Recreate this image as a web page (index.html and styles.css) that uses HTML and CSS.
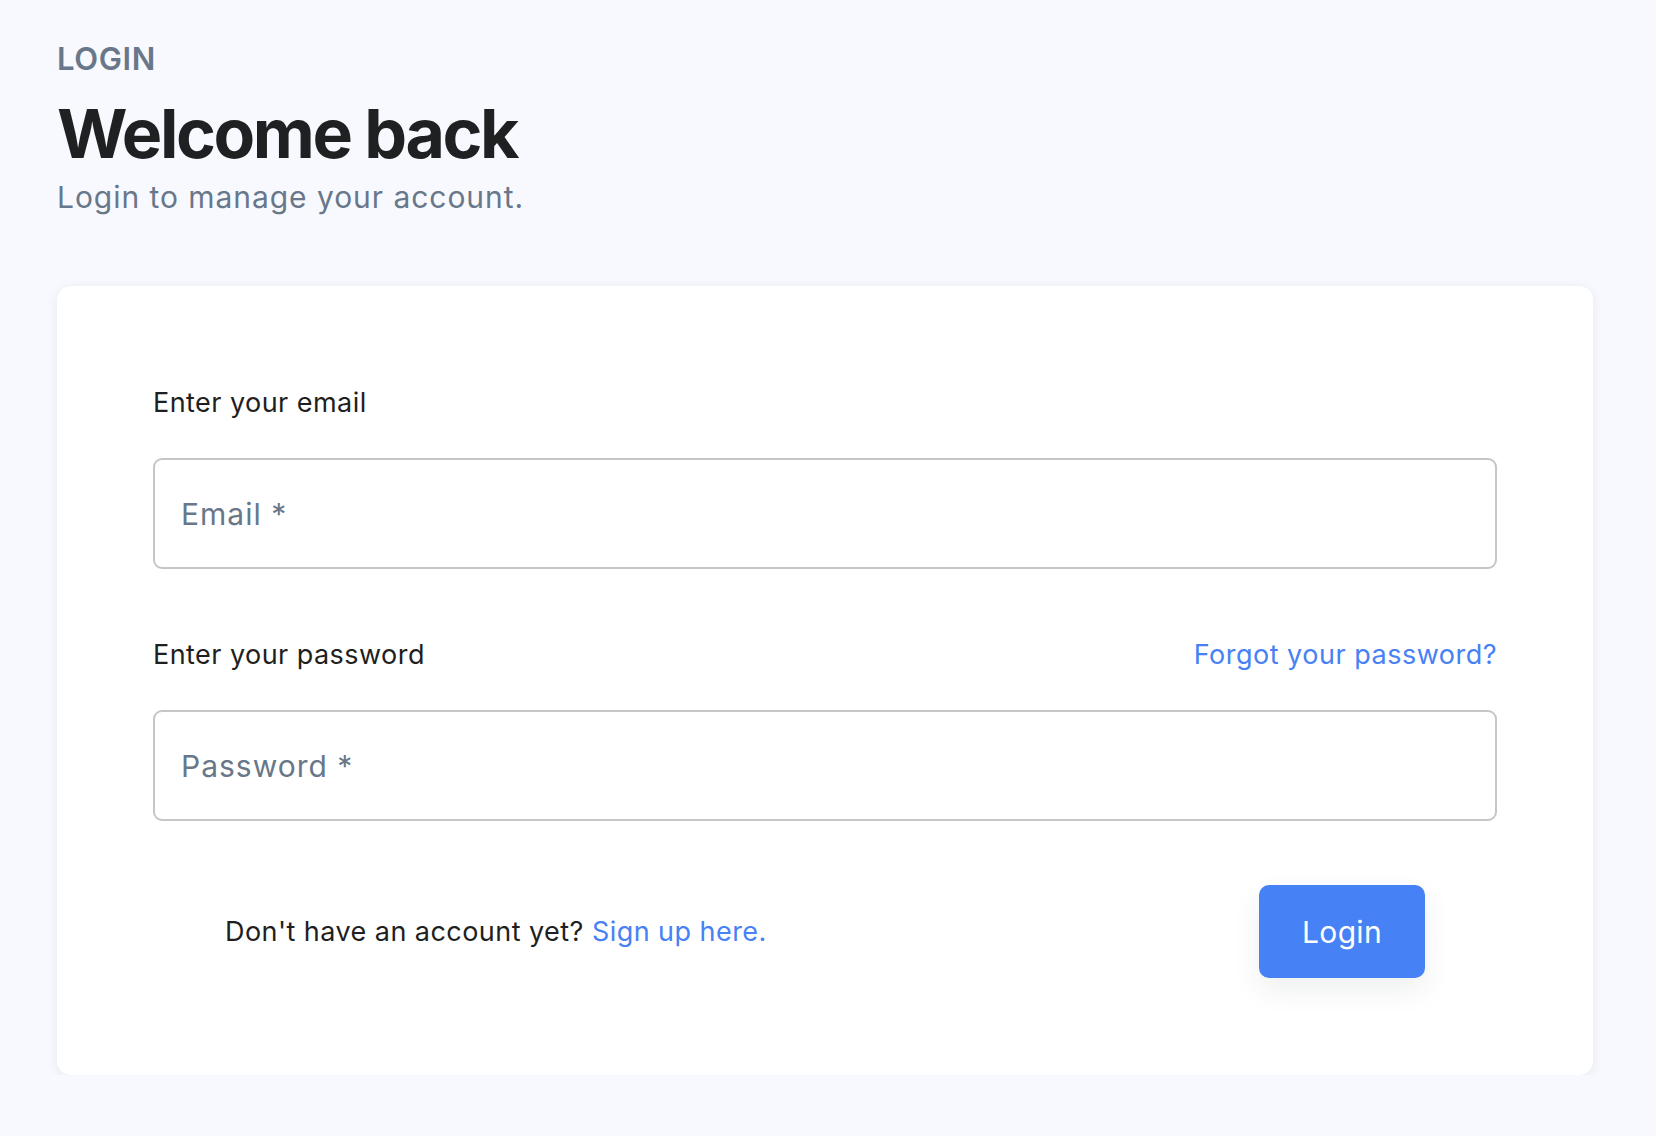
FILE: index.html
```html
<!DOCTYPE html>
<html lang="en">
<head>
<meta charset="utf-8">
<title>Login</title>
<link rel="stylesheet" href="styles.css">
</head>
<body>
<main class="page">
  <header class="intro">
    <div class="eyebrow">LOGIN</div>
    <h1 class="title">Welcome back</h1>
    <p class="subtitle">Login to manage your account.</p>
  </header>
  <section class="card">
    <form class="form">
      <div class="field">
        <div class="label-row">
          <label class="label" for="email">Enter your email</label>
        </div>
        <input class="input" id="email" type="email" placeholder="Email *">
      </div>
      <div class="field field-second">
        <div class="label-row">
          <label class="label" for="password">Enter your password</label>
          <a class="link" href="#">Forgot your password?</a>
        </div>
        <input class="input" id="password" type="password" placeholder="Password *">
      </div>
      <div class="actions">
        <p class="signup">Don't have an account yet? <a class="link" href="#">Sign up here.</a></p>
        <button class="button" type="button">Login</button>
      </div>
    </form>
  </section>
</main>
</body>
</html>
```

FILE: styles.css
```css
* {
  box-sizing: border-box;
}

html, body {
  margin: 0;
  padding: 0;
  background: #f8f9fe;
}

body {
  font-family: Inter, "Noto Sans", "Liberation Sans", sans-serif;
  color: #1f2023;
}

.page {
  padding: 40px 63px 0 57px;
}

.eyebrow {
  font-size: 31px;
  line-height: 38px;
  font-weight: 600;
  color: #687789;
  letter-spacing: 0.6px;
}

.title {
  margin: 15px 0 0;
  font-size: 68px;
  line-height: 80px;
  font-weight: 700;
  color: #1e2022;
  letter-spacing: -2.4px;
}

.subtitle {
  margin: 6px 0 0;
  font-size: 30px;
  line-height: 36px;
  font-weight: 400;
  color: #687789;
  letter-spacing: 0.95px;
}

.card {
  margin-top: 71px;
  width: 1536px;
  height: 789px;
  background: #ffffff;
  border-radius: 14px;
  box-shadow: 0 2px 12px rgba(30, 40, 80, 0.08);
  padding: 101px 96px 96px 96px;
}

.form {
  display: flex;
  flex-direction: column;
}

.field {
  display: flex;
  flex-direction: column;
}

.field-second {
  margin-top: 70px;
}

.label-row {
  display: flex;
  justify-content: space-between;
  align-items: baseline;
  margin-bottom: 39px;
}

.label {
  font-size: 27px;
  line-height: 32px;
  color: #1f1f21;
  letter-spacing: 0.45px;
}

.link {
  font-size: 27px;
  line-height: 32px;
  color: #4781f5;
  text-decoration: none;
  letter-spacing: 0.5px;
}

.input {
  width: 100%;
  height: 111px;
  border: 2px solid #c6c6c6;
  border-radius: 9px;
  padding: 0 26px;
  font-family: Inter, "Noto Sans", "Liberation Sans", sans-serif;
  font-size: 30px;
  letter-spacing: 1px;
  color: #1f2023;
  background: #ffffff;
  outline: none;
}

.input::placeholder {
  color: #687789;
  opacity: 1;
}

.actions {
  margin-top: 64px;
  display: flex;
  justify-content: space-between;
  align-items: center;
  padding: 0 72px;
}

.signup {
  margin: 0;
  font-size: 27px;
  line-height: 32px;
  color: #1f1f21;
  letter-spacing: 0.45px;
}

.signup .link {
  letter-spacing: 0.45px;
}

.button {
  width: 166px;
  height: 93px;
  padding: 0;
  border: none;
  border-radius: 10px;
  background: #4781f6;
  color: #ffffff;
  font-family: Inter, "Noto Sans", "Liberation Sans", sans-serif;
  font-size: 30px;
  letter-spacing: 0.3px;
  box-shadow: 0 12px 28px rgba(40, 50, 60, 0.08);
  cursor: pointer;
}
```
